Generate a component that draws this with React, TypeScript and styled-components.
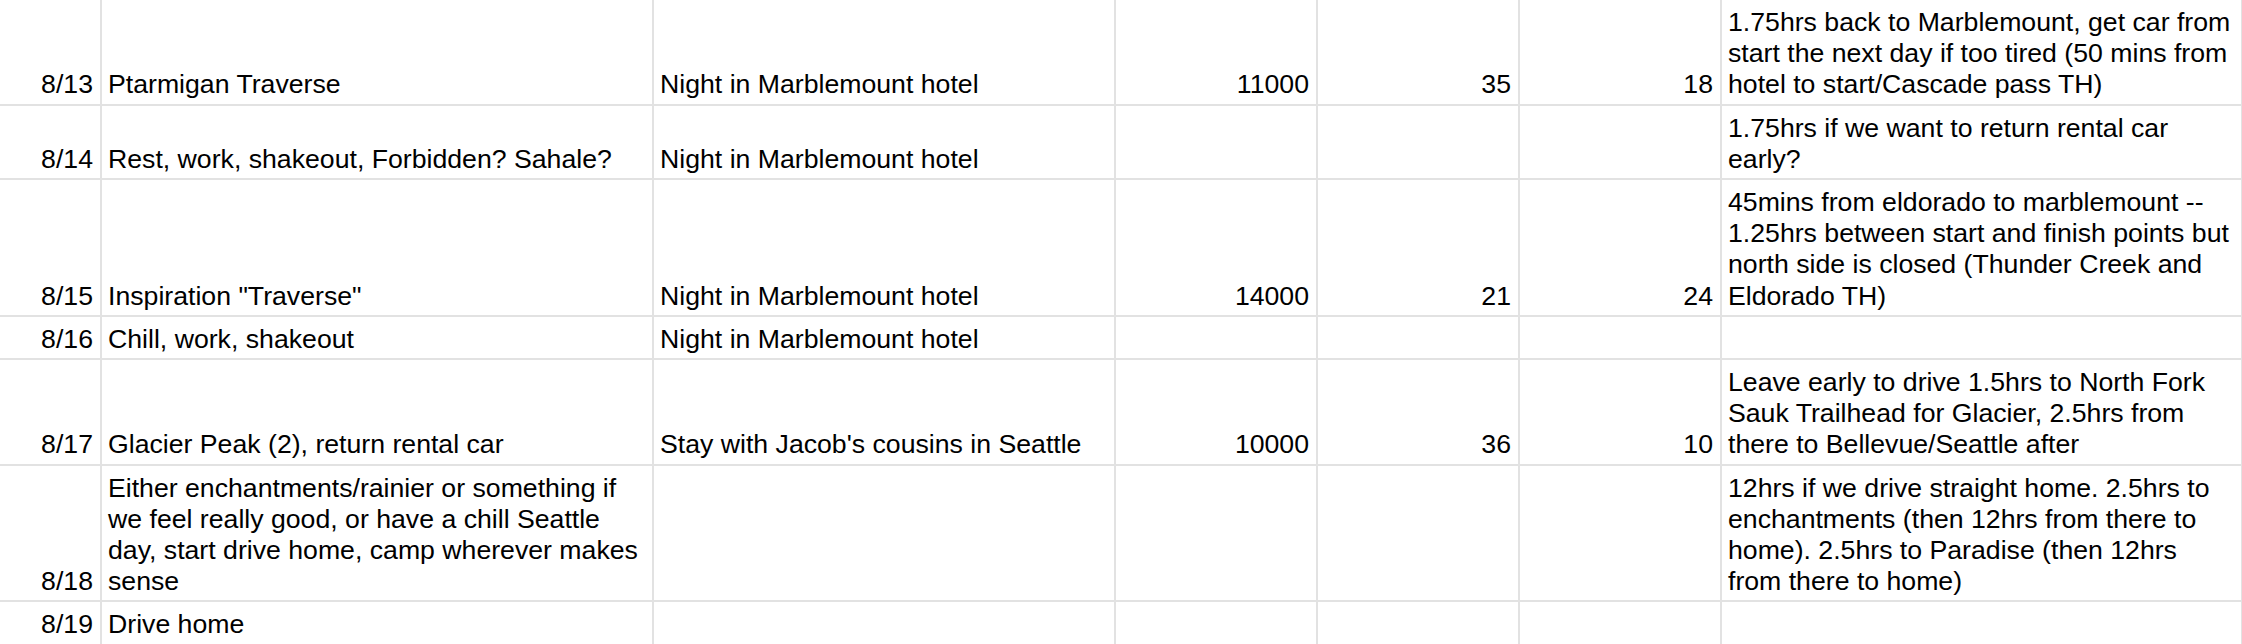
import React from "react";
import styled, { createGlobalStyle } from "styled-components";

const GlobalStyle = createGlobalStyle`
  html, body {
    margin: 0;
    padding: 0;
    background: #ffffff;
    overflow: hidden;
  }
  body {
    font-family: "Liberation Sans", Arial, sans-serif;
  }
`;

const Viewport = styled.div`
  width: 2242px;
  height: 644px;
  overflow: hidden;
  background: #ffffff;
`;

const Sheet = styled.div`
  display: grid;
  grid-template-columns: 102px 552px 462px 202px 202px 202px 521px;
  grid-auto-rows: auto;
  width: max-content;
`;

const Cell = styled.div<{ $align: "left" | "right" }>`
  box-sizing: border-box;
  display: flex;
  flex-direction: column;
  justify-content: flex-end;
  min-height: 43px;
  padding: 7px 7px 3px 6px;
  border-right: 2px solid #e2e2e2;
  border-bottom: 2px solid #e2e2e2;
  font-family: "Liberation Sans", Arial, sans-serif;
  font-size: 26.67px;
  line-height: 31.2px;
  color: #000000;
  text-align: ${(p) => p.$align};
  white-space: normal;
  overflow-wrap: break-word;
`;

type Row = {
  date: string;
  plan: string;
  night: string;
  gain: string;
  miles: string;
  hours: string;
  notes: string;
};

const rows: Row[] = [
  {
    date: "8/13",
    plan: "Ptarmigan Traverse",
    night: "Night in Marblemount hotel",
    gain: "11000",
    miles: "35",
    hours: "18",
    notes:
      "1.75hrs back to Marblemount, get car from start the next day if too tired (50 mins from hotel to start/Cascade pass TH)",
  },
  {
    date: "8/14",
    plan: "Rest, work, shakeout, Forbidden? Sahale?",
    night: "Night in Marblemount hotel",
    gain: "",
    miles: "",
    hours: "",
    notes: "1.75hrs if we want to return rental car early?",
  },
  {
    date: "8/15",
    plan: 'Inspiration "Traverse"',
    night: "Night in Marblemount hotel",
    gain: "14000",
    miles: "21",
    hours: "24",
    notes:
      "45mins from eldorado to marblemount -- 1.25hrs between start and finish points but north side is closed (Thunder Creek and Eldorado TH)",
  },
  {
    date: "8/16",
    plan: "Chill, work, shakeout",
    night: "Night in Marblemount hotel",
    gain: "",
    miles: "",
    hours: "",
    notes: "",
  },
  {
    date: "8/17",
    plan: "Glacier Peak (2), return rental car",
    night: "Stay with Jacob's cousins in Seattle",
    gain: "10000",
    miles: "36",
    hours: "10",
    notes:
      "Leave early to drive 1.5hrs to North Fork Sauk Trailhead for Glacier, 2.5hrs from there to Bellevue/Seattle after",
  },
  {
    date: "8/18",
    plan:
      "Either enchantments/rainier or something if we feel really good, or have a chill Seattle day, start drive home, camp wherever makes sense",
    night: "",
    gain: "",
    miles: "",
    hours: "",
    notes:
      "12hrs if we drive straight home. 2.5hrs to enchantments (then 12hrs from there to home). 2.5hrs to Paradise (then 12hrs from there to home)",
  },
  {
    date: "8/19",
    plan: "Drive home",
    night: "",
    gain: "",
    miles: "",
    hours: "",
    notes: "",
  },
];

export default function App() {
  return (
    <>
      <GlobalStyle />
      <Viewport>
        <Sheet>
          {rows.map((r) => (
            <React.Fragment key={r.date}>
              <Cell $align="right">{r.date}</Cell>
              <Cell $align="left">{r.plan}</Cell>
              <Cell $align="left">{r.night}</Cell>
              <Cell $align="right">{r.gain}</Cell>
              <Cell $align="right">{r.miles}</Cell>
              <Cell $align="right">{r.hours}</Cell>
              <Cell $align="left">{r.notes}</Cell>
            </React.Fragment>
          ))}
        </Sheet>
      </Viewport>
    </>
  );
}
